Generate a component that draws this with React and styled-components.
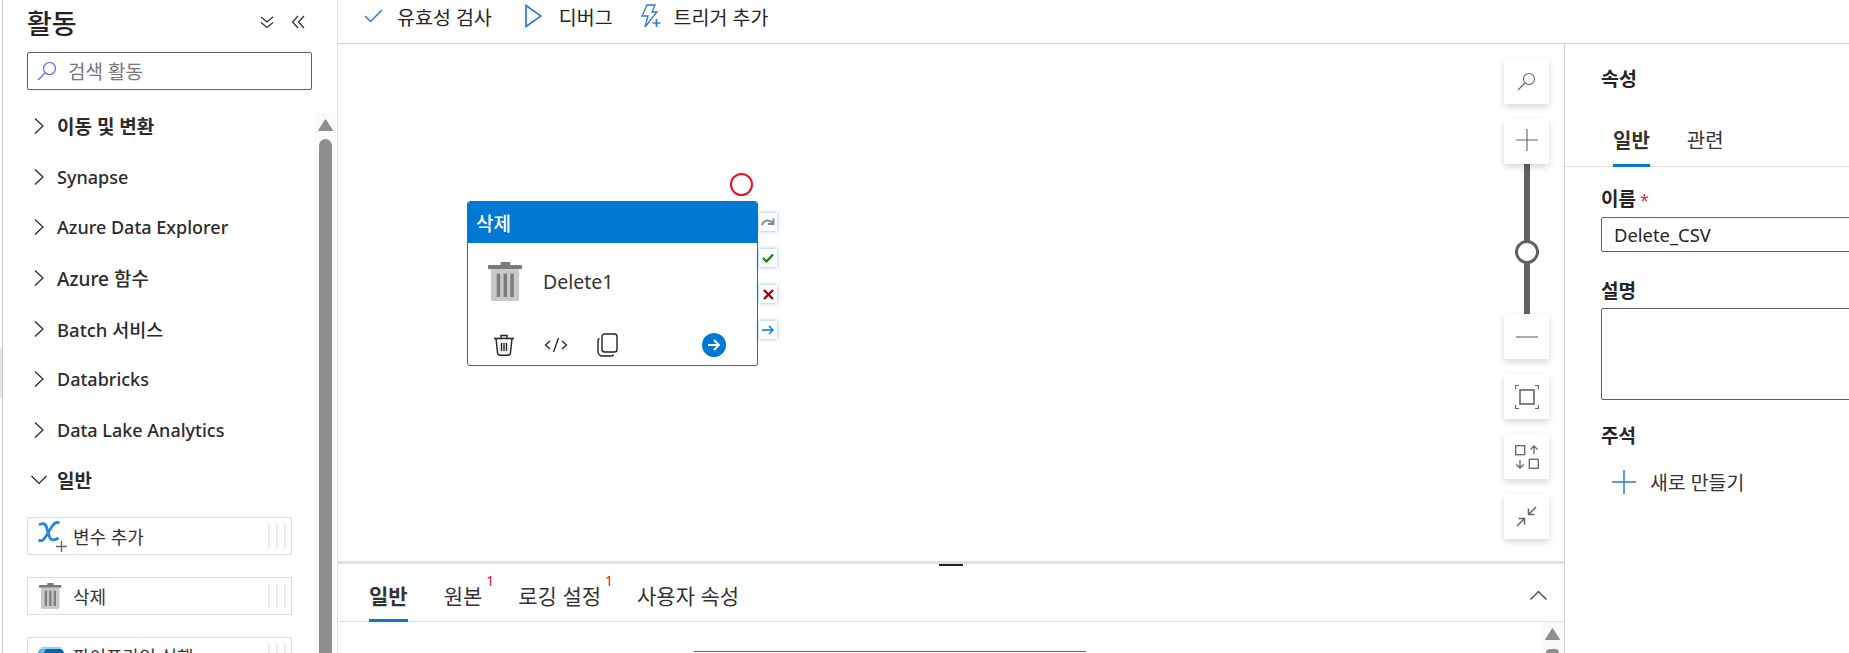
import React from 'react';
import styled, { createGlobalStyle } from 'styled-components';

const Global = createGlobalStyle`
  html, body { margin: 0; padding: 0; background: #fff; }
  body { font-family: "Noto Sans", "Noto Sans CJK KR", sans-serif; color: #242424; }
  * { box-sizing: border-box; }
`;

const Page = styled.div`display: flex; width: 1849px; height: 653px; overflow: hidden; background: #fff;`;
const Rail = styled.div`width: 3px; flex: none; border-right: 1px solid #ccc; padding-top: 348px;`;
const RailGrip = styled.div`width: 2px; height: 50px; background: #e6e6e6;`;

const Sidebar = styled.aside`width: 335px; flex: none; display: flex; flex-direction: column; border-right: 1px solid #e4e4e4;`;
const SideHead = styled.div`display: flex; align-items: center; height: 48px; padding: 0 32px 0 24px; justify-content: space-between;`;
const SideTitle = styled.h2`margin: 0; font-size: 27px; font-weight: 500; line-height: 48px;`;
const HeadIcons = styled.div`display: flex; gap: 17px; align-items: center; margin-top: -4px;`;
const Search = styled.div`display: flex; align-items: center; gap: 11px; height: 38px; margin: 4px 25px 0 24px; padding: 0 9px; border: 1px solid #616161; border-radius: 2px; font-size: 19px; color: #777;`;
const SideBody = styled.div`flex: 1; display: flex; margin-top: 11px; min-height: 0;`;
const Items = styled.div`flex: 1; min-width: 0; padding-left: 24px;`;
const Group = styled.div`display: flex; align-items: center; height: 50.6px; font-size: ${p => p.$size}px; font-weight: ${p => p.$bold ? 700 : 500}; color: #2b2b2b; white-space: nowrap;`;
const Chevron = styled.span`width: 30px; flex: none; display: flex; padding-left: ${p => p.$open ? 3 : 6}px;`;
const Card = styled.div`display: flex; align-items: center; height: 38px; width: 265px; border: 1px solid #ddd; margin-top: ${p => p.$top || 0}px; margin-bottom: ${p => p.$gap}px; font-size: 18px; position: relative; overflow: ${p => p.$clip ? 'hidden' : 'visible'}; flex: none;`;
const CardIcon = styled.span`width: 45px; flex: none; display: flex; justify-content: center;`;
const CardText = styled.span`flex: 1; color: #333; white-space: nowrap;`;
const Grip = styled.span`display: flex; gap: 6px; margin-right: 5px; height: 24px;`;
const GripBar = styled.i`display: block; width: 2px; background: #eaeaea;`;
const ScrollCol = styled.div`width: 21px; margin: 12px 1px 0 0; flex: none; display: flex; flex-direction: column; align-items: center; background: #fafafa;`;
const ScrollArrow = styled.svg`flex: none; margin-top: 6px;`;
const ScrollThumb = styled.div`flex: 1; width: 13px; margin-top: 8px; background: #8e8e8e; border-radius: 7px 7px 0 0;`;

const Main = styled.main`flex: 1; display: flex; flex-direction: column; min-width: 0;`;
const Toolbar = styled.div`height: 44px; flex: none; display: flex; align-items: flex-start; padding: 4px 0 0 26px; border-bottom: 1px solid #d4d4d4;`;
const ToolButton = styled.div`display: flex; align-items: center; height: 24px; gap: ${p => p.$gap}px; margin-right: ${p => p.$mr}px; font-size: 19.5px; color: #242424; white-space: nowrap;`;
const Work = styled.div`flex: 1; display: flex; min-height: 0;`;
const Center = styled.div`width: 1227px; flex: none; display: flex; flex-direction: column; border-right: 1px solid #ccc;`;

const Canvas = styled.div`height: 517px; flex: none; position: relative;`;
const Node = styled.div`position: absolute; left: 129px; top: 157px; width: 291px; height: 165px; border: 1px solid #0078d4; border-radius: 3px; background: #fff; display: flex; flex-direction: column;`;
const NodeHead = styled.div`height: 41px; flex: none; background: #0078d4; color: #fff; font-size: 19px; font-weight: 500; display: flex; align-items: center; padding-left: 8px; border-radius: 2px 2px 0 0;`;
const NodeBody = styled.div`flex: 1; display: flex; align-items: center; padding: 0 0 4px 20px; gap: 20px; font-size: 19.5px; color: #333;`;
const NodeFoot = styled.div`height: 41px; flex: none; display: flex; align-items: center; padding: 0 31px 0 25px; gap: 29px;`;
const NodeSpacer = styled.span`flex: 1;`;
const Breakpoint = styled.div`position: absolute; left: 392px; top: 129px; width: 23px; height: 23px; border: 2px solid #e81123; border-radius: 50%; background: #fff;`;
const Handles = styled.div`position: absolute; left: 421px; top: 169px; display: flex; flex-direction: column; gap: 18px;`;
const Handle = styled.div`width: 18px; height: 18px; background: #fff; box-shadow: 0 0 4px rgba(0,120,212,.55); display: flex; align-items: center; justify-content: center;`;

const Zoom = styled.div`position: absolute; left: 1166px; top: 15px; display: flex; flex-direction: column; align-items: center; width: 45px;`;
const ZoomButton = styled.div`width: 45px; height: 45px; flex: none; background: #fff; box-shadow: 0 3px 7px rgba(0,0,0,.16); display: flex; align-items: center; justify-content: center; margin-bottom: ${p => p.$mb || 0}px; padding-bottom: ${p => p.$pb || 0}px; position: relative; z-index: 1;`;
const Slider = styled.div`width: 6px; height: 150px; background: #616161; position: relative; flex: none;`;
const SliderThumb = styled.div`position: absolute; left: -9px; top: 76px; width: 24px; height: 24px; border: 3px solid #616161; border-radius: 50%; background: #fff;`;

const Bottom = styled.div`flex: 1; display: flex; flex-direction: column; border-top: 3px solid #e0e0e0; position: relative; min-height: 0; overflow: hidden;`;
const SplitGrip = styled.div`position: absolute; left: 601px; top: -2px; width: 24px; height: 4px; background: #222;`;
const TabBar = styled.div`height: 58px; flex: none; display: flex; align-items: stretch; padding: 0 17px 0 31px; border-bottom: 1px solid #e0e0e0;`;
const BTab = styled.div`display: flex; align-items: center; height: 58px; padding-top: 6px; margin-right: ${p => p.$mr}px; font-size: 21px; font-weight: ${p => p.$on ? 700 : 400}; color: #333; border-bottom: 3px solid ${p => p.$on ? '#0078d4' : 'transparent'}; position: relative; white-space: nowrap;`;
const Sup = styled.sup`position: absolute; right: -12px; top: 10px; font-size: 14px; line-height: 14px; color: #e81123; font-weight: 400; vertical-align: baseline;`;
const TabSpace = styled.div`flex: 1;`;
const Collapse = styled.div`display: flex; align-items: center; padding-top: 4px;`;
const BottomBody = styled.div`flex: 1; display: flex; min-height: 0;`;
const BottomMain = styled.div`flex: 1; padding: 29px 0 0 356px;`;
const FieldTop = styled.div`width: 392px; height: 1px; background: #666;`;
const BottomScroll = styled.div`width: 21px; margin-right: 1px; flex: none; background: #fafafa; display: flex; flex-direction: column; align-items: center;`;
const BottomThumb = styled.div`flex: 1; width: 13px; margin-top: 9px; background: #8e8e8e; border-radius: 7px 7px 0 0;`;

const Props = styled.section`flex: 1; min-width: 0; overflow: hidden;`;
const PropsTitle = styled.h3`margin: 0; height: 68px; padding: 22px 0 0 36px; font-size: 19.5px; line-height: 26px; font-weight: 700;`;
const PropTabs = styled.div`height: 55px; display: flex; padding-left: 48px; gap: 37px; border-bottom: 1px solid #e0e0e0;`;
const PropTab = styled.div`height: 55px; padding-top: 15px; font-size: 20px; line-height: 28px; font-weight: ${p => p.$on ? 700 : 400}; color: #333; border-bottom: 3px solid ${p => p.$on ? '#0078d4' : 'transparent'};`;
const Form = styled.div`padding: 19px 0 0 36px;`;
const Label = styled.label`display: block; font-size: 19px; line-height: 26px; font-weight: 700; margin-bottom: ${p => p.$mb}px;`;
const Star = styled.span`color: #d13438; font-weight: 400; margin-left: 4px; font-size: 16px;`;
const Input = styled.div`width: 300px; height: 35px; border: 1px solid #616161; border-radius: 2px; padding-left: 12px; font-size: 18.4px; line-height: 33px; margin-bottom: 26px;`;
const Area = styled.div`width: 300px; height: 92px; border: 1px solid #616161; border-radius: 2px; margin-bottom: 23px;`;
const NewRow = styled.div`display: flex; align-items: center; gap: 14px; padding-left: 11px; font-size: 19.4px; color: #333; white-space: nowrap;`;

const Stroke = ({ w = 16, h = 16, vb, color = '#333', sw = 1, children }) => (
  <svg width={w} height={h} viewBox={vb || `0 0 ${w} ${h}`} fill="none" stroke={color} strokeWidth={sw} style={{ display: 'block', flex: 'none' }}>{children}</svg>
);

const ChevR = () => <Stroke w={12} h={18} color="#222" sw={1.2}><path d="M2 1.500 10 9 2 16.500" /></Stroke>;
const ChevD = () => <Stroke w={18} h={12} color="#222" sw={1.2}><path d="M1.500 2 9 9.500 16.500 2" /></Stroke>;

const BigTrash = ({ s = 36 }) => (
  <svg width={s} height={s * 41 / 36} viewBox="0 0 36 41" style={{ display: 'block', flex: 'none' }}>
    <rect x="13" y="0" width="10" height="4" rx="1" fill="#7a7a7a" />
    <rect x="0" y="3" width="35" height="4.500" rx="1" fill="#7a7a7a" />
    <path d="M3 7.500h29V38a3 3 0 0 1-3 3H6a3 3 0 0 1-3-3z" fill="#c8c8c8" />
    <rect x="9" y="12" width="3.500" height="24" fill="#7a7a7a" />
    <rect x="16" y="12" width="3.500" height="24" fill="#7a7a7a" />
    <rect x="23" y="12" width="3.500" height="24" fill="#7a7a7a" />
  </svg>
);

const GripMark = () => <Grip><GripBar /><GripBar /><GripBar /></Grip>;

const groups = [['Synapse', 18], ['Azure Data Explorer', 18], ['Azure 함수', 19], ['Batch 서비스', 18.5], ['Databricks', 18], ['Data Lake Analytics', 18]];

export default function App() {
  return (
    <Page>
      <Global />
      <Rail><RailGrip /></Rail>
      <Sidebar>
        <SideHead>
          <SideTitle>활동</SideTitle>
          <HeadIcons>
            <Stroke w={14} h={14} sw={1.3}><path d="M1 2l6 5 6-5M1 7.500l6 5 6-5" /></Stroke>
            <Stroke w={14} h={14} sw={1.3}><path d="M7 1 1.500 7 7 13M13 1 7.500 7 13 13" /></Stroke>
          </HeadIcons>
        </SideHead>
        <Search>
          <Stroke w={20} h={20} color="#4f6bed" sw={1.2}><circle cx="12.500" cy="7.500" r="6" /><path d="M8 12 1 19" /></Stroke>
          검색 활동
        </Search>
        <SideBody>
          <Items>
            <Group $bold $size={19}><Chevron><ChevR /></Chevron>이동 및 변환</Group>
            {groups.map(([g, s]) => <Group key={g} $size={s}><Chevron><ChevR /></Chevron>{g}</Group>)}
            <Group $bold $size={19}><Chevron $open><ChevD /></Chevron>일반</Group>
            <Card $gap={22} $top={11}>
              <CardIcon>
                <svg width="32" height="32" viewBox="0 0 32 32" fill="none" style={{ display: 'block' }}>
                  <path d="M4 5c3-2 6-2 7.500 2l3 10c1 3 4 4 9 1" stroke="#2b88d8" strokeWidth="2.800" />
                  <path d="M24.500 3c-3-1.500-5.500 0-8 4l-6 10c-2 3.500-4.500 4.500-7 3" stroke="#2b88d8" strokeWidth="2.800" />
                  <path d="M26.500 21v11M21 26.500h11" stroke="#666" strokeWidth="1.400" />
                </svg>
              </CardIcon>
              <CardText>변수 추가</CardText>
              <GripMark />
            </Card>
            <Card $gap={22}>
              <CardIcon><BigTrash s={23} /></CardIcon>
              <CardText>삭제</CardText>
              <GripMark />
            </Card>
            <Card $gap={0} $clip>
              <CardIcon>
                <svg width="28" height="30" viewBox="0 0 28 30" style={{ display: 'block', marginTop: 9 }}>
                  <rect x="1" y="3" width="26" height="26" rx="6" fill="#0f5ea8" />
                  <path d="M1 9a6 6 0 0 1 6-6h3a8 8 0 0 0-3 6v20H6a5 5 0 0 1-5-5z" fill="#4fc3f0" />
                  <path d="M4 3h20" stroke="#8fd8f5" strokeWidth="2" />
                </svg>
              </CardIcon>
              <CardText>파이프라인 실행</CardText>
              <GripMark />
            </Card>
          </Items>
          <ScrollCol>
            <ScrollArrow width="15" height="12" viewBox="0 0 15 12"><path d="M7.500 0.500 14.500 11.500H.5z" fill="#8e8e8e" stroke="#8e8e8e" strokeLinejoin="round" /></ScrollArrow>
            <ScrollThumb />
          </ScrollCol>
        </SideBody>
      </Sidebar>

      <Main>
        <Toolbar>
          <ToolButton $gap={14} $mr={33}>
            <Stroke w={19} h={14} color="#2b7cd3" sw={1.5}><path d="M1 7l5.500 5.500L18 1" /></Stroke>유효성 검사
          </ToolButton>
          <ToolButton $gap={17} $mr={28}>
            <Stroke w={17} h={24} color="#2b7cd3" sw={1.7}><path d="M1 1.500v21L16 12z" /></Stroke>디버그
          </ToolButton>
          <ToolButton $gap={13} $mr={0}>
            <Stroke w={20} h={24} color="#2b7cd3" sw={1.3}>
              <path d="M6 1h8l-3 7h5L4 23l3-11H1z" />
              <path d="M15.500 15v8M11.500 19h8" strokeWidth="1.700" />
            </Stroke>트리거 추가
          </ToolButton>
        </Toolbar>
        <Work>
          <Center>
            <Canvas>
              <Breakpoint />
              <Node>
                <NodeHead>삭제</NodeHead>
                <NodeBody><BigTrash s={35} />Delete1</NodeBody>
                <NodeFoot>
                  <Stroke w={22} h={24} color="#222" sw={1.4}>
                    <path d="M1 5.500h20M8 5V2.500h6V5M3 5.500l1.500 14a3 3 0 0 0 3 2.800h7a3 3 0 0 0 3-2.800L19 5.500M8.500 10v8M11 10v8M13.500 10v8" />
                  </Stroke>
                  <Stroke w={24} h={16} color="#222" sw={1.3}><path d="M6 4 1.500 8 6 12M18 4l4.500 4L18 12M14.500 1 9.500 15" /></Stroke>
                  <Stroke w={21} h={24} color="#222" sw={1.4}>
                    <rect x="5" y="1" width="15" height="18" rx="2.500" />
                    <path d="M2.500 5.500A2 2 0 0 0 1 7.500v11a4.500 4.500 0 0 0 4.500 4.500h9a2 2 0 0 0 2-1.500" />
                  </Stroke>
                  <NodeSpacer />
                  <svg width="24" height="24" viewBox="0 0 24 24" style={{ display: 'block' }}>
                    <circle cx="12" cy="12" r="12" fill="#0078d4" />
                    <path d="M6 12h11M12 7l5 5-5 5" fill="none" stroke="#fff" strokeWidth="1.800" />
                  </svg>
                </NodeFoot>
              </Node>
              <Handles>
                <Handle><Stroke w={14} h={10} color="#888" sw={2}><path d="M1 8c1-5 7-6 11-2M12.500 1.500V7H7" /></Stroke></Handle>
                <Handle><Stroke w={12} h={10} color="#107c10" sw={2.200}><path d="M1 5l3.500 3.500L11 1.500" /></Stroke></Handle>
                <Handle><Stroke w={11} h={11} color="#a80000" sw={2.400}><path d="M1 1l9 9M10 1l-9 9" /></Stroke></Handle>
                <Handle><Stroke w={12} h={10} color="#0078d4" sw={1.400}><path d="M0 5h11M7 1l4 4-4 4" /></Stroke></Handle>
              </Handles>
              <Zoom>
                <ZoomButton $mb={15}>
                  <Stroke w={19} h={19} color="#666" sw={1.100}><circle cx="12" cy="7" r="5.500" /><path d="M8 11 1 18" /></Stroke>
                </ZoomButton>
                <ZoomButton $pb={4}><Stroke w={22} h={22} color="#666" sw={1.100}><path d="M11 0v22M0 11h22" /></Stroke></ZoomButton>
                <Slider><SliderThumb /></Slider>
                <ZoomButton $mb={15}><Stroke w={22} h={2} color="#666" sw={1.100}><path d="M0 1h22" /></Stroke></ZoomButton>
                <ZoomButton $mb={15}>
                  <Stroke w={24} h={24} color="#666" sw={1.200}>
                    <rect x="5" y="5" width="14" height="14" strokeWidth="1.600" />
                    <path d="M.5 4V.5H4M20 .5h3.500V4M23.500 20v3.500H20M4 23.500H.5V20" />
                  </Stroke>
                </ZoomButton>
                <ZoomButton $mb={15}>
                  <Stroke w={24} h={24} color="#666" sw={1.300}>
                    <rect x=".7" y=".7" width="9" height="9" />
                    <rect x="14.300" y="14.300" width="9" height="9" />
                    <path d="M19 9V1M15.500 4.500 19 1l3.500 3.500M5 15v8M1.500 19.500 5 23l3.500-3.500" />
                  </Stroke>
                </ZoomButton>
                <ZoomButton>
                  <Stroke w={21} h={21} color="#666" sw={1.500}>
                    <path d="M20 1l-7.500 7.500M12.500 2.500v6h6M1 20l7.500-7.500M2.500 12.500h6v6" />
                  </Stroke>
                </ZoomButton>
              </Zoom>
            </Canvas>
            <Bottom>
              <SplitGrip />
              <TabBar>
                <BTab $on $mr={36}>일반</BTab>
                <BTab $mr={36}>원본<Sup>1</Sup></BTab>
                <BTab $mr={36}>로깅 설정<Sup>1</Sup></BTab>
                <BTab $mr={0}>사용자 속성</BTab>
                <TabSpace />
                <Collapse><Stroke w={17} h={10} color="#333" sw={1.100}><path d="M.5 9.500 8.500 1.500l8 8" /></Stroke></Collapse>
              </TabBar>
              <BottomBody>
                <BottomMain><FieldTop /></BottomMain>
                <BottomScroll>
                  <ScrollArrow width="15" height="12" viewBox="0 0 15 12"><path d="M7.500 0.500 14.500 11.500H.5z" fill="#8e8e8e" stroke="#8e8e8e" strokeLinejoin="round" /></ScrollArrow>
                  <BottomThumb />
                </BottomScroll>
              </BottomBody>
            </Bottom>
          </Center>
          <Props>
            <PropsTitle>속성</PropsTitle>
            <PropTabs>
              <PropTab $on>일반</PropTab>
              <PropTab>관련</PropTab>
            </PropTabs>
            <Form>
              <Label $mb={4}>이름<Star>*</Star></Label>
              <Input>Delete_CSV</Input>
              <Label $mb={4}>설명</Label>
              <Area />
              <Label $mb={18}>주석</Label>
              <NewRow>
                <Stroke w={24} h={24} color="#2b7cd3" sw={1.500}><path d="M12 0v24M0 12h24" /></Stroke>새로 만들기
              </NewRow>
            </Form>
          </Props>
        </Work>
      </Main>
    </Page>
  );
}
